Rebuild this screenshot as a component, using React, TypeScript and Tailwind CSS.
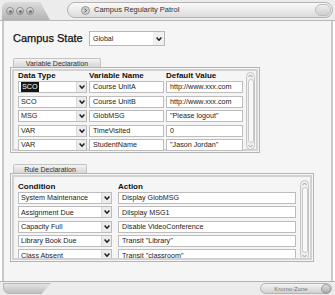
import React from 'react';

const vars = [
    { type: 'SCO', name: 'Course UnitA', value: 'http://www.xxx.com' },
    { type: 'SCO', name: 'Course UnitB', value: 'http://www.xxx.com' },
    { type: 'MSG', name: 'GlobMSG', value: '"Please logout"' },
    { type: 'VAR', name: 'TimeVisited', value: '0' },
    { type: 'VAR', name: 'StudentName', value: '"Jason Jordan"' },
];

const rules = [
    { cond: 'System Maintenance', action: 'Display GlobMSG' },
    { cond: 'Assignment Due', action: 'Dilsplay MSG1' },
    { cond: 'Capacity Full', action: 'Disable VideoConference' },
    { cond: 'Library Book Due', action: 'Transit "Library"' },
    { cond: 'Class Absent', action: 'Transit "classroom"' },
];

const Chevron = () => (
    <svg width="6" height="4" viewBox="0 0 6 4">
        <path d="M0.6 0.6 L3 3.2 L5.4 0.6" stroke="#1e1e1e" strokeWidth="1.5" fill="none" />
    </svg>
);

const Select = ({ value, w, hl }: { value: string; w: string; hl?: boolean }) => (
    <div className={`flex h-[12px] ${w} border border-[#bcbcbc] bg-white`}>
        <div className="flex-1 flex items-center pl-[2px] text-[7.2px] leading-none text-[#222] whitespace-nowrap overflow-hidden">
            {hl ? <span className="bg-[#151515] text-white px-[1px] py-[1px]">{value}</span> : value}
        </div>
        <div className="w-[10px] flex items-center justify-center bg-[#ececec] border-l border-[#dadada]">
            <Chevron />
        </div>
    </div>
);

const Field = ({ value, w }: { value: string; w: string }) => (
    <div className={`flex items-center h-[12px] ${w} border border-[#bcbcbc] bg-white pl-[3px] text-[7.2px] leading-none text-[#222] whitespace-nowrap overflow-hidden`}>
        {value}
    </div>
);

const Scroll = ({ h }: { h: string }) => (
    <div className={`w-[9px] ${h} flex flex-col items-center rounded-full border border-[#c6c6c6] bg-[#efefef] py-[1px]`}>
        <svg width="5" height="4" viewBox="0 0 5 4"><path d="M0.5 3 L2.5 1 L4.5 3" stroke="#9a9a9a" strokeWidth="1" fill="none" /></svg>
        <div className="flex-1 w-[6px] my-[1px] rounded-full border border-[#c8c8c8] bg-[#f8f8f8]" />
        <svg width="5" height="4" viewBox="0 0 5 4"><path d="M0.5 1 L2.5 3 L4.5 1" stroke="#9a9a9a" strokeWidth="1" fill="none" /></svg>
    </div>
);

const Tab = ({ label, w }: { label: string; w: string }) => (
    <div className={`${w} h-[9px] ml-[3px] flex items-center justify-center rounded-t-[2px] border border-b-0 border-[#c4c4c4] bg-gradient-to-b from-[#f4f4f4] to-[#d6d6d6] text-[7px] leading-none text-[#333]`}>
        {label}
    </div>
);

const Dot = () => (
    <div className="w-[8px] h-[8px] rounded-full border border-[#8e8e8e] bg-gradient-to-b from-[#e8e8e8] to-[#a8a8a8] flex items-center justify-center">
        <div className="w-[3px] h-[3px] rounded-full bg-[#777]" />
    </div>
);

export default function App() {
    return (
        <div className="w-[335px] h-[295px] bg-white flex flex-col overflow-hidden font-['Liberation_Sans',Arial,sans-serif]">
            {/* title bar */}
            <div className="h-[21px] flex items-end bg-[#ececec] border-b border-[#b8b8b8] pl-[2px] pr-[2px]">
                <div className="w-[48px] h-[18px] flex items-center gap-[2px] pl-[4px] rounded-tl-[6px] bg-gradient-to-b from-[#dcdcdc] to-[#b4b4b4] [clip-path:polygon(0_0,80%_0,100%_100%,0_100%)]">
                    <Dot />
                    <Dot />
                    <Dot />
                </div>
                <div className="w-[17px]" />
                <div className="flex-1 h-[16px] mb-[2px] flex items-center rounded-full border border-[#b4b4b4] bg-gradient-to-b from-[#fafafa] to-[#dcdcdc] pl-[13px] pr-[1px]">
                    <div className="w-[9px] h-[9px] rounded-full border border-[#999] bg-[#cfcfcf] flex items-center justify-center">
                        <svg width="5" height="5" viewBox="0 0 5 5"><path d="M1.5 0.8 L3.8 2.5 L1.5 4.2" stroke="#666" strokeWidth="1" fill="none" /></svg>
                    </div>
                    <span className="ml-[4px] text-[7.5px] leading-none text-[#333]">Campus Regularity Patrol</span>
                    <div className="flex-1" />
                    <div className="w-[16px] h-[12px] rounded-full border border-[#bdbdbd] bg-gradient-to-b from-[#eeeeee] to-[#cfcfcf]" />
                </div>
            </div>

            {/* body */}
            <div className="flex-1 mx-[2px] border-x-2 border-[#c9c9c9] bg-[#f5f5f5] pl-[6px] pt-[10px] flex flex-col">
                <div className="flex items-center h-[15px] pl-[3px]">
                    <span className="w-[76px] whitespace-nowrap text-[11px] leading-none text-[#111] [-webkit-text-stroke:0.25px_#111]">Campus State</span>
                    <div className="flex w-[76px] h-[15px] border border-[#b8b8b8] bg-white">
                        <div className="flex-1 flex items-center pl-[3px] text-[7px] leading-none text-[#222]">Global</div>
                        <div className="w-[11px] flex items-center justify-center bg-[#f0f0f0]"><Chevron /></div>
                    </div>
                </div>

                {/* variable declaration */}
                <div className="mt-[12px]">
                    <Tab label="Variable Declaration" w="w-[88px]" />
                    <div className="w-[250px] h-[86px] border border-[#b4b4b4] p-[1px]">
                        <div className="h-full border-2 border-[#d2d2d2] flex pl-[4px] pr-[1px] pt-[1px]">
                            <div className="flex-1 flex flex-col">
                                <div className="flex h-[10px] items-center text-[8px] font-bold leading-none text-[#111]">
                                    <span className="w-[71px]">Data Type</span>
                                    <span className="w-[77px]">Variable Name</span>
                                    <span>Default Value</span>
                                </div>
                                <div className="flex flex-col gap-[2.5px] mt-[1px]">
                                    {vars.map((v, i) => (
                                        <div key={i} className="flex gap-[2px]">
                                            <Select value={v.type} w="w-[69px]" hl={i === 0} />
                                            <Field value={v.name} w="w-[75px]" />
                                            <Field value={v.value} w="w-[77px]" />
                                        </div>
                                    ))}
                                </div>
                            </div>
                            <Scroll h="h-[78px]" />
                        </div>
                    </div>
                </div>

                {/* rule declaration */}
                <div className="mt-[11px]">
                    <Tab label="Rule Declaration" w="w-[74px]" />
                    <div className="w-[304px] h-[89px] border border-[#b4b4b4] p-[1px]">
                        <div className="h-full border-2 border-[#d2d2d2] flex pl-[4px] pr-[1px] pt-[3px] overflow-hidden">
                            <div className="flex-1 flex flex-col pt-[3px]">
                                <div className="flex h-[10px] items-center text-[8px] font-bold leading-none text-[#111]">
                                    <span className="w-[100px]">Condition</span>
                                    <span>Action</span>
                                </div>
                                <div className="flex flex-col gap-[2.3px] mt-[1px]">
                                    {rules.map((r, i) => (
                                        <div key={i} className="flex gap-[6px]">
                                            <Select value={r.cond} w="w-[94px]" />
                                            <Field value={r.action} w="w-[178px]" />
                                        </div>
                                    ))}
                                </div>
                            </div>
                            <Scroll h="h-[80px]" />
                        </div>
                    </div>
                </div>
            </div>

            {/* footer */}
            <div className="h-[14px] flex items-center border-t border-[#b4b4b4] bg-[#ececec] px-[3px]">
                <div className="w-[48px] h-[11px] rounded-bl-[6px] border border-[#b8b8b8] bg-gradient-to-b from-[#e4e4e4] to-[#bdbdbd] [clip-path:polygon(0_0,100%_0,80%_100%,0_100%)]" />
                <div className="flex-1" />
                <div className="w-[72px] h-[11px] flex items-center rounded-full border border-[#b4b4b4] bg-gradient-to-b from-[#f4f4f4] to-[#d0d0d0]">
                    <span className="flex-1 text-center text-[6px] leading-none text-[#777]">Kromo-Zone</span>
                    <div className="w-[10px] h-[10px] rounded-full border border-[#999] bg-gradient-to-b from-[#e0e0e0] to-[#a8a8a8]" />
                </div>
            </div>
        </div>
    );
}
